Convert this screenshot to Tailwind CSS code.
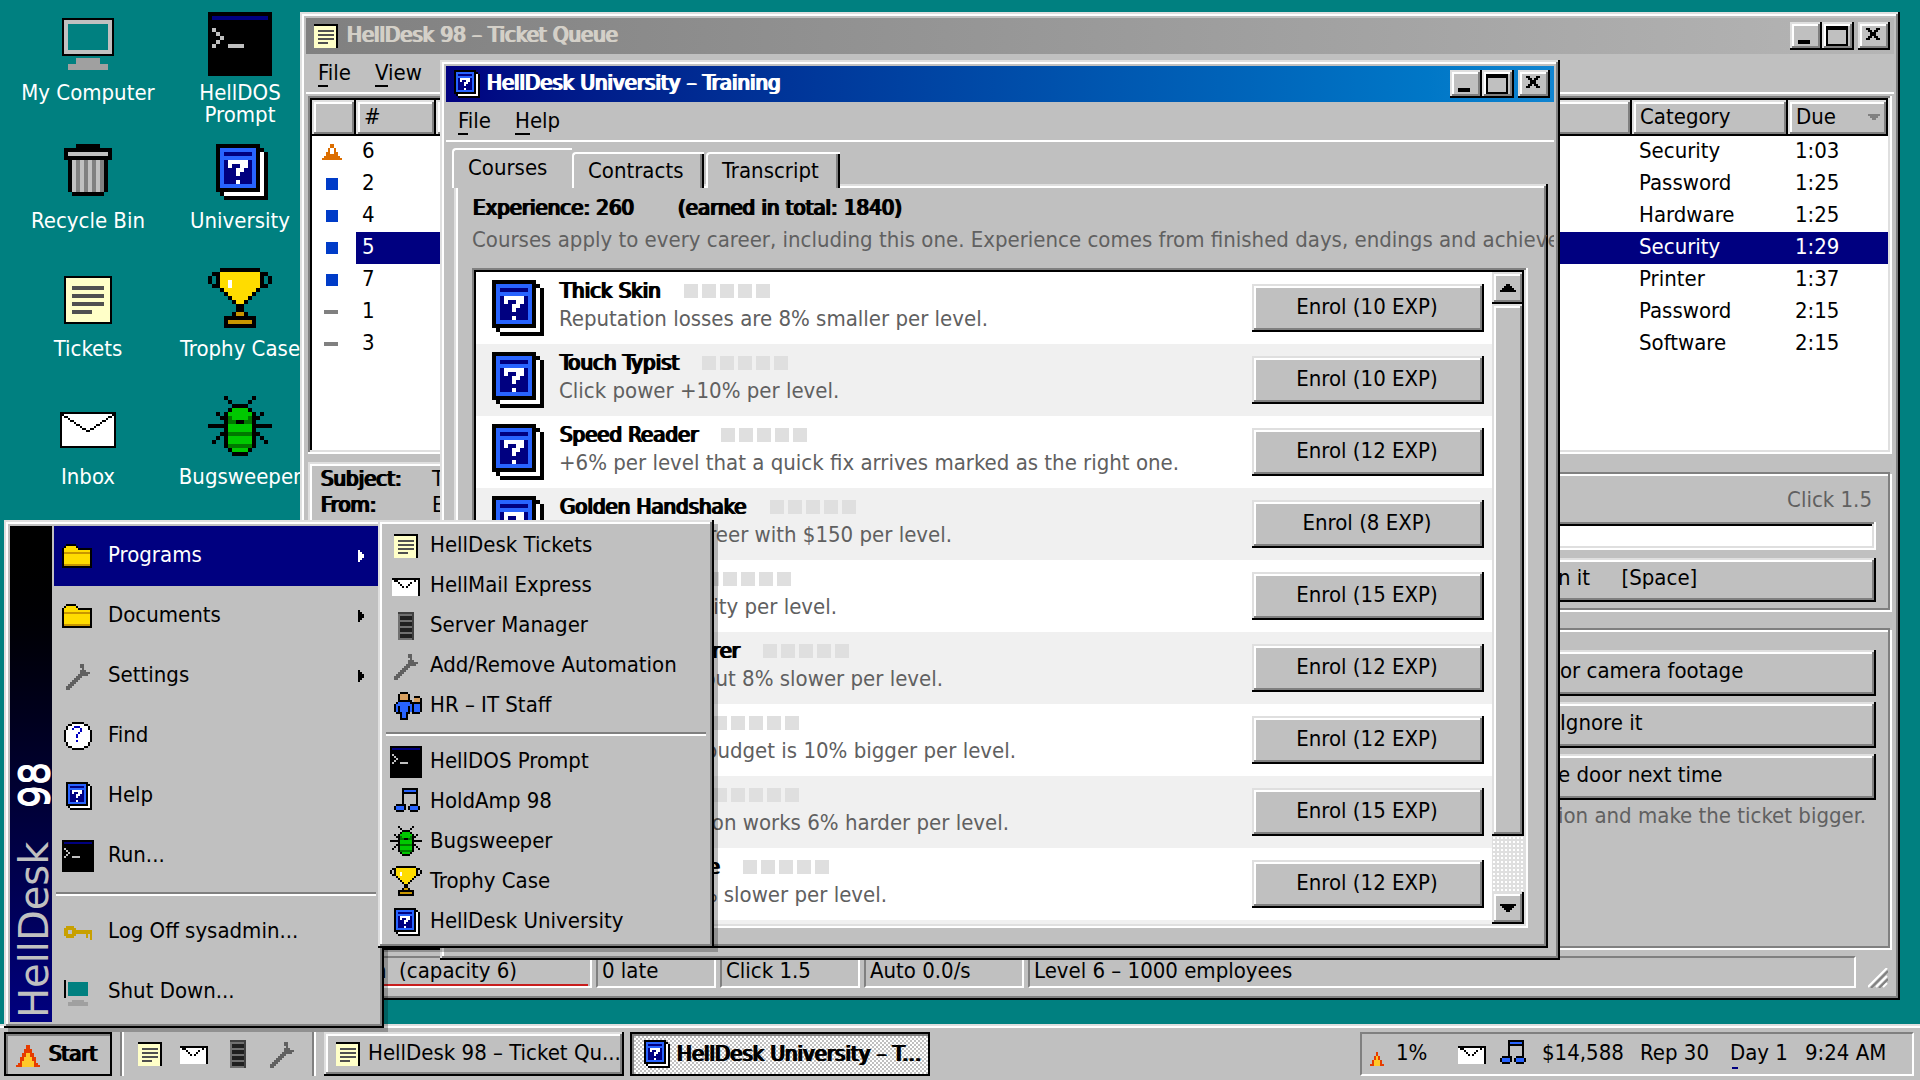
<!DOCTYPE html>
<html lang="en">
<head>
<meta charset="utf-8">
<meta name="viewport" content="width=device-width, initial-scale=1">
<title>HellDesk 98</title>
<script src="https://cdn.jsdelivr.net/npm/@tailwindcss/browser@4"></script>
</head>
<body class="relative h-screen overflow-hidden bg-[#008080] font-['DejaVu_Sans_Condensed','DejaVu_Sans',sans-serif] text-[22px] leading-7 whitespace-nowrap text-black">

<!-- Pixel icons, one symbol each -->
<svg class="hidden" aria-hidden="true">
  <symbol id="computer" viewBox="0 0 32 32"><path d="M3 3h26v19H3z"/><path fill="#c0c0c0" d="M4 4h24v17H4z"/><path fill="#008080" d="M6 6h20v13H6z"/><path fill="#a0a0a0" d="M10 23h12v3H10zM6 26h20v3H6z"/></symbol>
  <symbol id="computer-s" viewBox="0 0 16 16"><path d="M1 2h1v9H1z"/><path fill="#008080" d="M3 3h10v7H3z"/><path fill="#a0a0a0" d="M5 12h6v1H5zM3 13h10v2H3z"/></symbol>
  <symbol id="dos" viewBox="0 0 16 16"><path d="M0 0h16v16H0z"/><path fill="#000080" d="M1 1h14v1H1z"/><path fill="#c0c0c0" d="M1 4h1v1H1zM2 5h1v1H2zM3 6h1v1H3zM2 7h1v1H2zM1 8h1v1H1zM5 8h4v1H5z"/></symbol>
  <symbol id="bin" viewBox="0 0 16 16"><path d="M5 1h6v1H5zM2 2h12v3H2zM3 5h10v8H3zM4 13h8v1H4z"/><path fill="#c0c0c0" d="M3 3h10v1H3zM4 5h8v8H4z"/><path fill="#808080" d="M5 5h1v8H5zM7 5h1v8H7zM9 5h1v8H9zM11 5h1v8h-1z"/></symbol>
  <symbol id="book" viewBox="0 0 16 16"><path d="M2 1h11v12H2zM13 2h1v1h-1zM14 3h1v12H4v-1h10zM3 13h1v1H3z"/><path fill="#fff" d="M13 3h1v11H4v-1h9z"/><path fill="#2864ff" d="M3 2h9v10H3z"/><path fill="#000080" d="M4 3h7v1H4zM4 5h7v6H4z"/><path fill="#fff" d="M5 5h5v1H5zM5 6h1v1H5zM8 6h2v1H8zM7 7h2v1H7zM7 8h1v1H7zM7 10h1v1H7z"/></symbol>
  <symbol id="note" viewBox="0 0 32 32"><path d="M4 4h24v24H4z"/><path fill="#ffffc8" d="M5 5h22v22H5z"/><path fill="#505050" d="M8 9h16v2H8zM8 13h16v2H8zM8 17h16v2H8zM8 21h10v2H8z"/></symbol>
  <symbol id="note-s" viewBox="0 0 16 16"><path d="M2 2h12v12H2z"/><path fill="#ffffc8" d="M2 3h11v11H2z"/><path fill="#505050" d="M4 5h8v1H4zM4 7h8v1H4zM4 9h8v1H4zM4 11h5v1H4z"/></symbol>
  <symbol id="mail" viewBox="0 0 32 32"><path d="M2 8h28v18H2z"/><path fill="#fff" d="M3 9h26v16H3z"/><path d="M3 9h1v1h2v1h1v1h2v1h1v1h2v1h1v1h2v1h2v-1h2v-1h1v-1h2v-1h1v-1h2v-1h1v-1h2V9h1v1h-1v1h-2v1h-1v1h-2v1h-1v1h-2v1h-1v1h-2v1h-2v-1h-2v-1h-1v-1h-2v-1h-1v-1H7v-1H6v-1H4v-1H3z"/></symbol>
  <symbol id="mail-s" viewBox="0 0 16 16"><path fill="#fff" d="M1 4h14v9H1z"/><path d="M1 4h14v9h-1V5H1zM2 5h2v1H2zM4 6h1v1H4zM5 7h1v1H5zM6 8h1v1H6zM8 8h1v1H8zM9 7h1v1H9zM10 6h1v1h-1zM12 5h1v1h-1z"/></symbol>
  <symbol id="trophy" viewBox="0 0 16 16"><path d="M3 0h10v1h2v1h1v2h-1v1h-2v1h-1v1h-1v1h-1v1H9v2h1v1h2v3H4v-3h2v-1h1V9H6V8H5V7H4V6H3V5H1V4H0V2h1V1h2z"/><path fill="#ffdc00" d="M3 1h10v4h-1v1h-1v1h-1v1H9v1H7V8H6V7H5V6H4V5H3z"/><path fill="#008080" d="M1 2h1v2H1zM14 2h1v2h-1z"/><path fill="#fff" d="M5 3h1v2H5z"/><path fill="#c89600" d="M7 11h2v1H7zM5 13h6v1H5z"/></symbol>
  <symbol id="trophy-s" viewBox="0 0 16 16"><path d="M3 0h10v1h2v1h1v2h-1v1h-2v1h-1v1h-1v1h-1v1H9v2h1v1h2v3H4v-3h2v-1h1V9H6V8H5V7H4V6H3V5H1V4H0V2h1V1h2z"/><path fill="#ffdc00" d="M3 1h10v4h-1v1h-1v1h-1v1H9v1H7V8H6V7H5V6H4V5H3z"/><path fill="#c0c0c0" d="M1 2h1v2H1zM14 2h1v2h-1z"/><path fill="#fff" d="M5 3h1v2H5z"/><path fill="#c89600" d="M7 11h2v1H7zM5 13h6v1H5z"/></symbol>
  <symbol id="bug" viewBox="0 0 16 16"><path d="M4 0h1v1H4zM5 1h1v1H5zM11 0h1v1h-1zM10 1h1v1h-1zM6 2h4v1h1v1h1v9h-1v1h-1v1H6v-1H5v-1H4V4h1V3h1zM2 4h1v1H2zM3 5h1v1H3zM13 4h1v1h-1zM12 5h1v1h-1zM0 7h4v1H0zM12 7h4v1h-4zM3 9h1v1H3zM2 10h1v1H2zM1 11h1v1H1zM12 9h1v1h-1zM13 10h1v1h-1zM14 11h1v1h-1z"/><path fill="#00c800" d="M6 3h4v1h1v9h-1v1H6v-1H5V4h1z"/><path fill="#007800" d="M5 5h1v1H5zM10 5h1v1h-1zM5 6h6v1H5zM5 9h6v1H5zM5 12h6v1H5z"/><path d="M7 6h2v1H7z"/></symbol>
  <symbol id="folder" viewBox="0 0 16 16"><path d="M2 2h5v1h1v1h7v10H0V4h1V3h1z"/><path fill="#ffdc00" d="M2 3h5v1h1v1h6v8H1V4h1z"/><path fill="#c89600" d="M1 6h13v1H1zM1 12h13v1H1z"/></symbol>
  <symbol id="wrench" viewBox="0 0 16 16"><path fill="#606060" d="M9 2h2v3h1v1h2v1h-1v1h-3v1H9v1H8v1H7v1H6v1H5v1H4v1H2v-2h1v-1h1v-1h1v-1h1V9h1V8h1V7h1V5h1V4H9z"/></symbol>
  <symbol id="find" viewBox="0 0 16 16"><path d="M5 1h6v1h2v1h1v2h1v6h-1v2h-1v1h-2v1H5v-1H3v-1H2v-2H1V5h1V3h1V2h2z"/><path fill="#fff" d="M5 2h6v1h2v2h1v6h-1v2h-2v1H5v-1H3v-2H2V5h1V3h2z"/><path fill="#0000c0" d="M6 3h3v1H6zM5 4h1v1H5zM9 4h1v2H9zM8 6h1v1H8zM7 7h1v2H7zM7 10h1v1H7z"/></symbol>
  <symbol id="key" viewBox="0 0 16 16"><path fill="#c8a000" fill-rule="evenodd" d="M2 5h4v1h1v1h8v5h-1V9h-1v2h-1V9H7v1H6v1H2v-1H1V6h1zM3 7v2h2V7z"/></symbol>
  <symbol id="server" viewBox="0 0 16 16"><path fill="#404040" d="M4 1h8v14H4z"/><path fill="#707070" d="M4 2h7v13H4z"/><path fill="#202020" d="M5 3h6v2H5zM5 6h6v2H5zM5 9h6v2H5zM5 12h6v2H5z"/></symbol>
  <symbol id="people" viewBox="0 0 16 16"><path d="M5 1h4v1h1v3h1v1h1V3h3v1h1v7h-1v1h-4v-1h-1v1H9v3H5v-3H3v-1H2V7h1V6h1V2h1z"/><path fill="#d8a060" d="M5 2h4v3H5zM12 4h3v2h-3z"/><path fill="#2864ff" d="M4 6h6v1h1v4h-1V8H9v3H8v3H6v-3H5V8H4v3H3V7h1zM12 7h3v4h-3z"/></symbol>
  <symbol id="music" viewBox="0 0 16 16"><path d="M6 1h8v9h1v2h-1v1h-4v-1H9v-2h1V9h3V4H7v5h1v3H7v1H3v-1H2v-2h1V9h3z"/><path fill="#2864ff" d="M7 2h6v1H7zM3 10h4v2H3zM10 10h4v2h-4z"/></symbol>
  <symbol id="flame" viewBox="0 0 12 11"><path fill="#e63c00" d="M5 0h2v2h1v2h1v2h1v3h1v1h1v1H0v-1h1V9h1V6h1V4h1V2h1z"/><path fill="#ffc828" d="M5 4h2v2h1v2h1v3H3V8h1V6h1z"/></symbol>
  <symbol id="flame-s" viewBox="0 0 7 7"><path fill="#e63c00" d="M3 0h1v2h1v2h1v2h1v1H0V6h1V4h1V2h1z"/><path fill="#ffc828" d="M3 2h1v2h1v3H2V4h1z"/></symbol>
  <symbol id="high" viewBox="0 0 10 8"><path fill="#dc6e00" fill-rule="evenodd" d="M4 0h2v2h1v2h1v2h1v1h1v1H0V7h1V6h1V4h1V2h1zM4 2v3h2V2z"/></symbol>
  <symbol id="medium" viewBox="0 0 10 8"><path fill="#003cc8" d="M2 1h6v6H2z"/></symbol>
  <symbol id="low" viewBox="0 0 10 8"><path fill="#808080" d="M1 3h7v2H1z"/></symbol>
</svg>

<!-- Desktop -->
<nav aria-label="Desktop" class="ml-3 grid w-[304px] auto-rows-[128px] grid-cols-2 pt-3 text-center leading-[22px] text-white">
  <a href="#" class="flex flex-col items-center gap-1.5"><svg class="size-16" shape-rendering="crispEdges"><use href="#computer"/></svg>My Computer</a>
  <a href="#" class="flex flex-col items-center gap-1.5"><svg class="size-16" shape-rendering="crispEdges"><use href="#dos"/></svg><span>HellDOS<br>Prompt</span></a>
  <a href="#" class="flex flex-col items-center gap-1.5"><svg class="size-16" shape-rendering="crispEdges"><use href="#bin"/></svg>Recycle Bin</a>
  <a href="#" class="flex flex-col items-center gap-1.5"><svg class="size-16" shape-rendering="crispEdges"><use href="#book"/></svg>University</a>
  <a href="#" class="flex flex-col items-center gap-1.5"><svg class="size-16" shape-rendering="crispEdges"><use href="#note"/></svg>Tickets</a>
  <a href="#" class="flex flex-col items-center gap-1.5"><svg class="size-16" shape-rendering="crispEdges"><use href="#trophy"/></svg>Trophy Case</a>
  <a href="#" class="flex flex-col items-center gap-1.5"><svg class="size-16" shape-rendering="crispEdges"><use href="#mail"/></svg>Inbox</a>
  <a href="#" class="flex flex-col items-center gap-1.5"><svg class="size-16" shape-rendering="crispEdges"><use href="#bug"/></svg>Bugsweeper</a>
</nav>

<!-- Ticket queue window -->
<section class="absolute top-3 right-5 bottom-20 left-[300px] flex flex-col bg-[#c0c0c0] p-1.5 shadow-[inset_-2px_-2px_#000,inset_2px_2px_#dfdfdf,inset_-4px_-4px_#808080,inset_4px_4px_#fff]">
  <header class="flex h-9 flex-none items-center bg-linear-to-r from-[#808080] to-[#b5b5b5] px-1">
    <svg class="size-8" shape-rendering="crispEdges"><use href="#note-s"/></svg>
    <h1 class="grow pb-0.5 pl-1 text-[#d4d0c8] [text-shadow:1px_0_currentColor,2px_0_currentColor]">HellDesk 98 – Ticket Queue</h1>
    <div data-controls class="flex"></div>
  </header>
  <div class="flex h-10 flex-none items-center gap-6 border-b-2 border-white pl-3">
    <button><span class="border-b-2 border-black">F</span>ile</button>
    <button><span class="border-b-2 border-black">V</span>iew</button>
  </div>

  <div class="mx-0.5 mt-0.5 h-[358px] flex-none overflow-hidden bg-white p-1 shadow-[inset_-2px_-2px_#fff,inset_2px_2px_#808080,inset_-4px_-4px_#dfdfdf,inset_4px_4px_#000]">
    <table class="w-full table-fixed border-collapse text-left">
      <colgroup><col class="w-11"><col class="w-20"><col><col class="w-[156px]"><col class="w-[100px]"></colgroup>
      <thead>
        <tr class="h-9 bg-[#c0c0c0]">
          <th class="p-0 font-normal shadow-[inset_-2px_-2px_#000,inset_2px_2px_#dfdfdf,inset_-4px_-4px_#808080,inset_4px_4px_#fff]"></th>
          <th class="p-0 pb-0.5 pl-2 font-normal shadow-[inset_-2px_-2px_#000,inset_2px_2px_#dfdfdf,inset_-4px_-4px_#808080,inset_4px_4px_#fff]">#</th>
          <th class="p-0 font-normal shadow-[inset_-2px_-2px_#000,inset_2px_2px_#dfdfdf,inset_-4px_-4px_#808080,inset_4px_4px_#fff]"></th>
          <th class="p-0 pb-0.5 pl-2 font-normal shadow-[inset_-2px_-2px_#000,inset_2px_2px_#dfdfdf,inset_-4px_-4px_#808080,inset_4px_4px_#fff]">Category</th>
          <th class="p-0 pb-0.5 pl-2 font-normal shadow-[inset_-2px_-2px_#000,inset_2px_2px_#dfdfdf,inset_-4px_-4px_#808080,inset_4px_4px_#fff]"><span class="flex items-center justify-between pr-2">Due<svg class="h-1.5 w-3" viewBox="0 0 6 3" shape-rendering="crispEdges"><path fill="#808080" d="M0 0h6v1H5v1H4v1H2V2H1V1H0z"/></svg></span></th>
        </tr>
      </thead>
      <tbody id="tickets"></tbody>
    </table>
  </div>

  <div class="mx-0.5 flex min-h-0 flex-1 gap-3">
    <dl class="mt-2 grid flex-1 grid-cols-[112px_1fr] content-start px-3 pt-1 leading-[26px] shadow-[inset_-2px_-2px_#000,inset_2px_2px_#dfdfdf,inset_-4px_-4px_#808080,inset_4px_4px_#fff]">
      <dt class="[text-shadow:1px_0_currentColor,2px_0_currentColor]">Subject:</dt><dd>T</dd>
      <dt class="[text-shadow:1px_0_currentColor,2px_0_currentColor]">From:</dt><dd>E</dd>
    </dl>
    <div class="mr-0.5 mb-0.5 flex w-[576px] flex-col gap-[18px] pt-[18px]">
      <div class="flex flex-col gap-2 border-2 border-[#808080] px-3 pt-3 pb-1.5 shadow-[2px_2px_#fff,inset_2px_2px_#fff]">
        <p class="pr-1 text-right text-[#606060]">Click 1.5</p>
        <div role="progressbar" aria-label="Ticket progress" aria-valuenow="0" class="h-7 bg-white shadow-[inset_-2px_-2px_#fff,inset_2px_2px_#808080,inset_-4px_-4px_#dfdfdf,inset_4px_4px_#000]"></div>
        <button class="h-11 pb-1 pl-[230px] text-left whitespace-pre shadow-[inset_-2px_-2px_#000,inset_2px_2px_#dfdfdf,inset_-4px_-4px_#808080,inset_4px_4px_#fff]">n it     [Space]</button>
      </div>
      <div class="flex flex-1 flex-col gap-1.5 border-2 border-[#808080] px-3 pt-5 shadow-[2px_2px_#fff,inset_2px_2px_#fff]">
        <button class="h-[46px] pb-1 pl-[232px] text-left shadow-[inset_-2px_-2px_#000,inset_2px_2px_#dfdfdf,inset_-4px_-4px_#808080,inset_4px_4px_#fff]">or camera footage</button>
        <button class="h-[46px] pb-1 pl-[232px] text-left shadow-[inset_-2px_-2px_#000,inset_2px_2px_#dfdfdf,inset_-4px_-4px_#808080,inset_4px_4px_#fff]">Ignore it</button>
        <button class="h-[46px] pb-1 pl-[230px] text-left shadow-[inset_-2px_-2px_#000,inset_2px_2px_#dfdfdf,inset_-4px_-4px_#808080,inset_4px_4px_#fff]">e door next time</button>
        <p class="-mt-1 pl-[230px] text-[#606060]">ion and make the ticket bigger.</p>
      </div>
    </div>
  </div>

  <footer class="mx-0.5 my-1.5 flex h-8 flex-none gap-1">
    <div class="flex w-[284px] border-2 border-t-[#808080] border-r-white border-b-white border-l-[#808080] pr-0.5">
      <span class="grow border-b-2 border-[#c81e1e] pl-16 leading-[26px] whitespace-pre">n  (capacity 6)</span>
    </div>
    <div class="w-[120px] border-2 border-t-[#808080] border-r-white border-b-white border-l-[#808080] pl-1 leading-[26px]">0 late</div>
    <div class="w-[140px] border-2 border-t-[#808080] border-r-white border-b-white border-l-[#808080] pl-1 leading-[26px]">Click 1.5</div>
    <div class="w-[160px] border-2 border-t-[#808080] border-r-white border-b-white border-l-[#808080] pl-1 leading-[26px]">Auto 0.0/s</div>
    <div class="grow border-2 border-t-[#808080] border-r-white border-b-white border-l-[#808080] pl-1 leading-[26px]">Level 6 – 1000 employees</div>
    <svg class="mt-3 mr-1 ml-2 size-5 flex-none" viewBox="0 0 20 20"><path stroke="#fff" stroke-width="2" d="M0 19 19 0M8 19 19 8M15 19l4-4"/><path stroke="#808080" stroke-width="2" d="M3 20 20 3M11 20l9-9"/></svg>
  </footer>
</section>

<!-- University window -->
<section class="absolute top-[60px] left-[440px] h-[900px] w-[1120px] bg-[#c0c0c0] p-1.5 shadow-[inset_-2px_-2px_#000,inset_2px_2px_#dfdfdf,inset_-4px_-4px_#808080,inset_4px_4px_#fff]">
  <div class="flex h-full flex-col overflow-hidden">
    <header class="flex h-9 flex-none items-center bg-linear-to-r from-[#000080] to-[#1084d0] px-1">
      <svg class="size-8" shape-rendering="crispEdges"><use href="#book"/></svg>
      <h2 class="grow pb-0.5 pl-1 text-white [text-shadow:1px_0_currentColor,2px_0_currentColor]">HellDesk University – Training</h2>
      <div data-controls class="flex"></div>
    </header>
    <div class="flex h-10 flex-none items-center gap-6 border-b-2 border-white pl-3">
      <button><span class="border-b-2 border-black">F</span>ile</button>
      <button><span class="border-b-2 border-black">H</span>elp</button>
    </div>
    <div role="tablist" class="relative -mb-1 flex flex-none items-end pt-1.5 pl-1.5">
      <button role="tab" aria-selected="true" class="h-10 w-[120px] rounded-tl-sm border-t-2 border-l-2 border-white bg-[#c0c0c0] pb-0.5 pl-3.5 text-left">Courses</button>
      <button role="tab" aria-selected="false" class="h-9 w-[132px] rounded-tl-sm border-t-2 border-l-2 border-white bg-[#c0c0c0] pl-3.5 text-left shadow-[inset_-2px_0_#000,inset_-4px_0_#808080]">Contracts</button>
      <button role="tab" aria-selected="false" class="ml-0.5 h-9 w-[134px] rounded-tl-sm border-t-2 border-l-2 border-white bg-[#c0c0c0] pl-3.5 text-left shadow-[inset_-2px_0_#000,inset_-4px_0_#808080]">Transcript</button>
    </div>
    <div class="mr-1.5 mb-1.5 ml-2 flex min-h-0 flex-1 flex-col pt-2 pr-5 pb-5 pl-[18px] leading-8 shadow-[inset_-2px_-2px_#000,inset_2px_2px_#dfdfdf,inset_-4px_-4px_#808080,inset_4px_4px_#fff]">
      <p class="whitespace-pre [text-shadow:1px_0_currentColor,2px_0_currentColor]">Experience: 260       (earned in total: 1840)</p>
      <p class="text-[#606060]">Courses apply to every career, including this one. Experience comes from finished days, endings and achieve</p>
      <div class="mt-3 flex min-h-0 flex-1 bg-white p-1 shadow-[inset_-2px_-2px_#fff,inset_2px_2px_#808080,inset_-4px_-4px_#dfdfdf,inset_4px_4px_#000]">
        <ul id="courses" class="grow overflow-hidden"></ul>
        <div class="flex w-8 flex-none flex-col bg-[#dfdfdf] bg-[radial-gradient(#fff_1px,transparent_1px)] bg-size-[4px_4px]">
          <button aria-label="Scroll up" class="flex h-8 items-center justify-center bg-[#c0c0c0] shadow-[inset_-2px_-2px_#000,inset_2px_2px_#dfdfdf,inset_-4px_-4px_#808080,inset_4px_4px_#fff]"><svg class="h-2 w-4" viewBox="0 0 8 4" shape-rendering="crispEdges"><path d="M3 0h2v1h1v1h1v1h1v1H0V3h1V2h1V1h1z"/></svg></button>
          <div class="h-[532px] bg-[#c0c0c0] shadow-[inset_-2px_-2px_#000,inset_2px_2px_#dfdfdf,inset_-4px_-4px_#808080,inset_4px_4px_#fff]"></div>
          <button aria-label="Scroll down" class="mt-auto flex h-8 items-center justify-center bg-[#c0c0c0] shadow-[inset_-2px_-2px_#000,inset_2px_2px_#dfdfdf,inset_-4px_-4px_#808080,inset_4px_4px_#fff]"><svg class="h-2 w-4" viewBox="0 0 8 4" shape-rendering="crispEdges"><path d="M0 0h8v1H7v1H6v1H5v1H3V3H2V2H1V1H0z"/></svg></button>
        </div>
      </div>
    </div>
  </div>
</section>

<!-- Taskbar -->
<footer class="absolute inset-x-0 bottom-0 flex h-14 bg-[#c0c0c0] pt-2 pr-1.5 pb-1 pl-1 shadow-[inset_0_2px_#dfdfdf,inset_0_4px_#fff]">
  <button aria-expanded="true" class="flex w-[108px] items-center gap-2 pl-3 shadow-[inset_0_0_0_2px_#000,inset_4px_4px_#808080]"><svg class="mt-1 h-[22px] w-6" shape-rendering="crispEdges"><use href="#flame"/></svg><span class="[text-shadow:1px_0_currentColor,2px_0_currentColor]">Start</span></button>
  <div class="ml-2 w-1 border-r-2 border-l-2 border-l-[#808080] border-r-white"></div>
  <nav aria-label="Quick launch" class="flex items-center gap-3 px-2.5">
    <a href="#" aria-label="Tickets"><svg class="size-8" shape-rendering="crispEdges"><use href="#note-s"/></svg></a>
    <a href="#" aria-label="Mail"><svg class="size-8" shape-rendering="crispEdges"><use href="#mail-s"/></svg></a>
    <a href="#" aria-label="Server Manager"><svg class="size-8" shape-rendering="crispEdges"><use href="#server"/></svg></a>
    <a href="#" aria-label="Automation"><svg class="size-8" shape-rendering="crispEdges"><use href="#wrench"/></svg></a>
  </nav>
  <div class="ml-1 w-1 border-r-2 border-l-2 border-l-[#808080] border-r-white"></div>
  <button class="ml-2 flex w-[300px] items-center gap-1 pl-2 shadow-[inset_-2px_-2px_#000,inset_2px_2px_#dfdfdf,inset_-4px_-4px_#808080,inset_4px_4px_#fff]"><svg class="size-8 flex-none" shape-rendering="crispEdges"><use href="#note-s"/></svg><span class="pb-0.5">HellDesk 98 – Ticket Qu...</span></button>
  <button class="ml-1.5 flex w-[300px] items-center gap-1 bg-[conic-gradient(#fff_25%,#c0c0c0_0_50%,#fff_0_75%,#c0c0c0_0)] bg-size-[4px_4px] pl-2.5 shadow-[inset_0_0_0_2px_#000,inset_4px_4px_#808080]"><svg class="size-8 flex-none" shape-rendering="crispEdges"><use href="#book"/></svg><span class="[text-shadow:1px_0_currentColor,2px_0_currentColor]">HellDesk University – T...</span></button>
  <div class="ml-auto flex w-[554px] items-center border-2 border-t-[#808080] border-r-white border-b-white border-l-[#808080] pl-2">
    <svg class="mt-2.5 mr-3 size-3.5" shape-rendering="crispEdges"><use href="#flame-s"/></svg>
    <span class="w-[60px] pb-0.5">1%</span>
    <svg class="mr-2 size-8" shape-rendering="crispEdges"><use href="#mail-s"/></svg>
    <svg class="mr-3.5 size-8" shape-rendering="crispEdges"><use href="#music"/></svg>
    <span class="w-[98px] pb-0.5">$14,588</span>
    <span class="w-[90px] pb-0.5">Rep 30</span>
    <span class="relative w-[75px] pb-0.5">Day 1<span class="absolute bottom-0 left-0.5 h-0.5 w-1.5 bg-[#000080]"></span></span>
    <time class="pb-0.5">9:24 AM</time>
  </div>
</footer>

<!-- Start menu -->
<div class="absolute bottom-[52px] left-1 flex w-[380px] bg-[#c0c0c0] p-1.5 shadow-[inset_-2px_-2px_#000,inset_2px_2px_#dfdfdf,inset_-4px_-4px_#808080,inset_4px_4px_#fff,4px_4px_rgb(0_0_0/0.25)]">
  <div class="mr-0.5 flex w-[42px] rotate-180 items-start bg-linear-to-b from-[#000080] to-black pt-1 pr-1.5 text-[40px] leading-9 text-[#c0c0c0] [writing-mode:vertical-rl]"><span class="font-['DejaVu_Sans']">HellDesk</span><span class="pt-[34px] text-white [text-shadow:0_1px_currentColor,0_2px_currentColor]">98</span></div>
  <ul class="grow" id="start"></ul>
</div>
<ul id="programs" class="absolute bottom-[132px] left-[378px] w-[336px] bg-[#c0c0c0] p-1.5 shadow-[inset_-2px_-2px_#000,inset_2px_2px_#dfdfdf,inset_-4px_-4px_#808080,inset_4px_4px_#fff,4px_4px_rgb(0_0_0/0.25)]"></ul>

<script>
const put = (id, html) => { document.getElementById(id).innerHTML = html; };
const icon = (name, size) => `<svg class="${size} flex-none" shape-rendering="crispEdges"><use href="#${name}"/></svg>`;

// Window buttons
const ctl = 'flex h-7 w-8 items-center justify-center bg-[#c0c0c0] shadow-[inset_-2px_-2px_#000,inset_2px_2px_#dfdfdf,inset_-4px_-4px_#808080,inset_4px_4px_#fff]';
document.querySelectorAll('[data-controls]').forEach(el => {
  el.innerHTML =
    `<button aria-label="Minimize" class="${ctl}"><svg class="h-5 w-6" viewBox="0 0 12 10" shape-rendering="crispEdges"><path d="M2 7h6v2H2z"/></svg></button>` +
    `<button aria-label="Maximize" class="${ctl}"><svg class="h-6 w-6" viewBox="0 0 12 12" shape-rendering="crispEdges"><path fill-rule="evenodd" d="M0 1h11v10H0zM1 3v7h9V3z"/></svg></button>` +
    `<button aria-label="Close" class="${ctl} ml-1"><svg class="h-5 w-6" viewBox="0 0 12 10" shape-rendering="crispEdges"><path d="M2 1h2v1h1v1h1V2h1V1h2v1H8v1H7v2h1v1h1v1H7V6H6V5H5v1H4v1H2V6h1V5h1V3H3V2H2z"/></svg></button>`;
});

// Ticket rows
put('tickets', [
  ['high', 6, 'Security', '1:03'], ['medium', 2, 'Password', '1:25'], ['medium', 4, 'Hardware', '1:25'],
  ['medium', 5, 'Security', '1:29', true], ['medium', 7, 'Printer', '1:37'], ['low', 1, 'Password', '2:15'], ['low', 3, 'Software', '2:15'],
].map(([level, n, cat, due, on]) => {
  const c = on ? 'bg-[#000080] text-white' : '';
  return `<tr class="h-8"><td class="p-0 pl-2.5">${icon(level, 'h-4 w-5')}</td><td class="p-0 pb-0.5 pl-1.5 ${c}">${n}</td><td class="p-0 ${c}"></td><td class="p-0 pb-0.5 pl-[7px] ${c}">${cat}</td><td class="p-0 pb-0.5 pl-[7px] ${c}">${due}</td></tr>`;
}).join(''));

// Courses: title, description, price, then the widths of lines that start behind the menu
put('courses', [
  ['Thick Skin', 'Reputation losses are 8% smaller per level.', 10],
  ['Touch Typist', 'Click power +10% per level.', 10],
  ['Speed Reader', '+6% per level that a quick fix arrives marked as the right one.', 12],
  ['Golden Handshake', 'reer with $150 per level.', 8, 0, 393],
  ['', 'ity per level.', 15, 122, 278],
  ['rer', 'out 8% slower per level.', 12, 180, 384],
  ['', 'budget is 10% bigger per level.', 12, 130, 457],
  ['', 'on works 6% harder per level.', 15, 130, 450],
  ['e', '% slower per level.', 12, 160, 328],
].map(([title, text, exp, tw, dw]) => `<li class="flex h-[72px] items-center pr-2 pl-2 even:bg-[#f0f0f0]">${icon('book', 'size-16')}
<div class="grow pb-1.5 pl-[11px] leading-7"><div class="flex h-7 items-center gap-6"><h3 class="text-right [text-shadow:1px_0_currentColor,2px_0_currentColor]"${tw ? ` style="width:${tw}px"` : ''}>${title}</h3><span class="flex gap-1" aria-label="Level 0 of 5">${'<i class="size-3.5 bg-[#dfdfdf]"></i>'.repeat(5)}</span></div><p class="text-[#606060]${dw ? ' text-right' : ''}"${dw ? ` style="width:${dw}px"` : ''}>${text}</p></div>
<button class="h-12 w-[232px] bg-[#c0c0c0] pr-0.5 pb-0.5 shadow-[inset_-2px_-2px_#000,inset_2px_2px_#dfdfdf,inset_-4px_-4px_#808080,inset_4px_4px_#fff]">Enrol (${exp} EXP)</button></li>`).join('') + '<li class="h-1 bg-[#f0f0f0]"></li>');

// Menus
const rule = '<li class="h-4 px-0.5 pt-1.5"><hr class="h-1 border-t-2 border-b-2 border-t-[#808080] border-b-white"></li>';
const arrow = '<svg class="mr-3.5 h-3 w-1.5" viewBox="0 0 3 6" shape-rendering="crispEdges"><path fill="currentColor" d="M0 0h1v1h1v1h1v2H2v1H1v1H0z"/></svg>';
put('start', [
  ['folder', 'Programs', 1], ['folder', 'Documents', 1], ['wrench', 'Settings', 1], ['find', 'Find'], ['book', 'Help'], ['dos', 'Run...'],
  null, ['key', 'Log Off sysadmin...'], ['computer-s', 'Shut Down...'],
].map((m, i) => m ? `<li><button class="flex h-[60px] w-full items-center pl-2 text-left ${i ? '' : 'bg-[#000080] text-white'}">${icon(m[0], 'size-8')}<span class="grow pb-0.5 pl-3.5">${m[1]}</span>${m[2] ? arrow : ''}</button></li>` : rule).join(''));
put('programs', [
  ['note-s', 'HellDesk Tickets'], ['mail-s', 'HellMail Express'], ['server', 'Server Manager'], ['wrench', 'Add/Remove Automation'], ['people', 'HR – IT Staff'],
  null, ['dos', 'HellDOS Prompt'], ['music', 'HoldAmp 98'], ['bug', 'Bugsweeper'], ['trophy-s', 'Trophy Case'], ['book', 'HellDesk University'],
].map(m => m ? `<li><button class="flex h-10 w-full items-center pl-1.5 text-left">${icon(m[0], 'size-8')}<span class="pb-0.5 pl-2">${m[1]}</span></button></li>` : rule).join(''));
</script>
</body>
</html>
